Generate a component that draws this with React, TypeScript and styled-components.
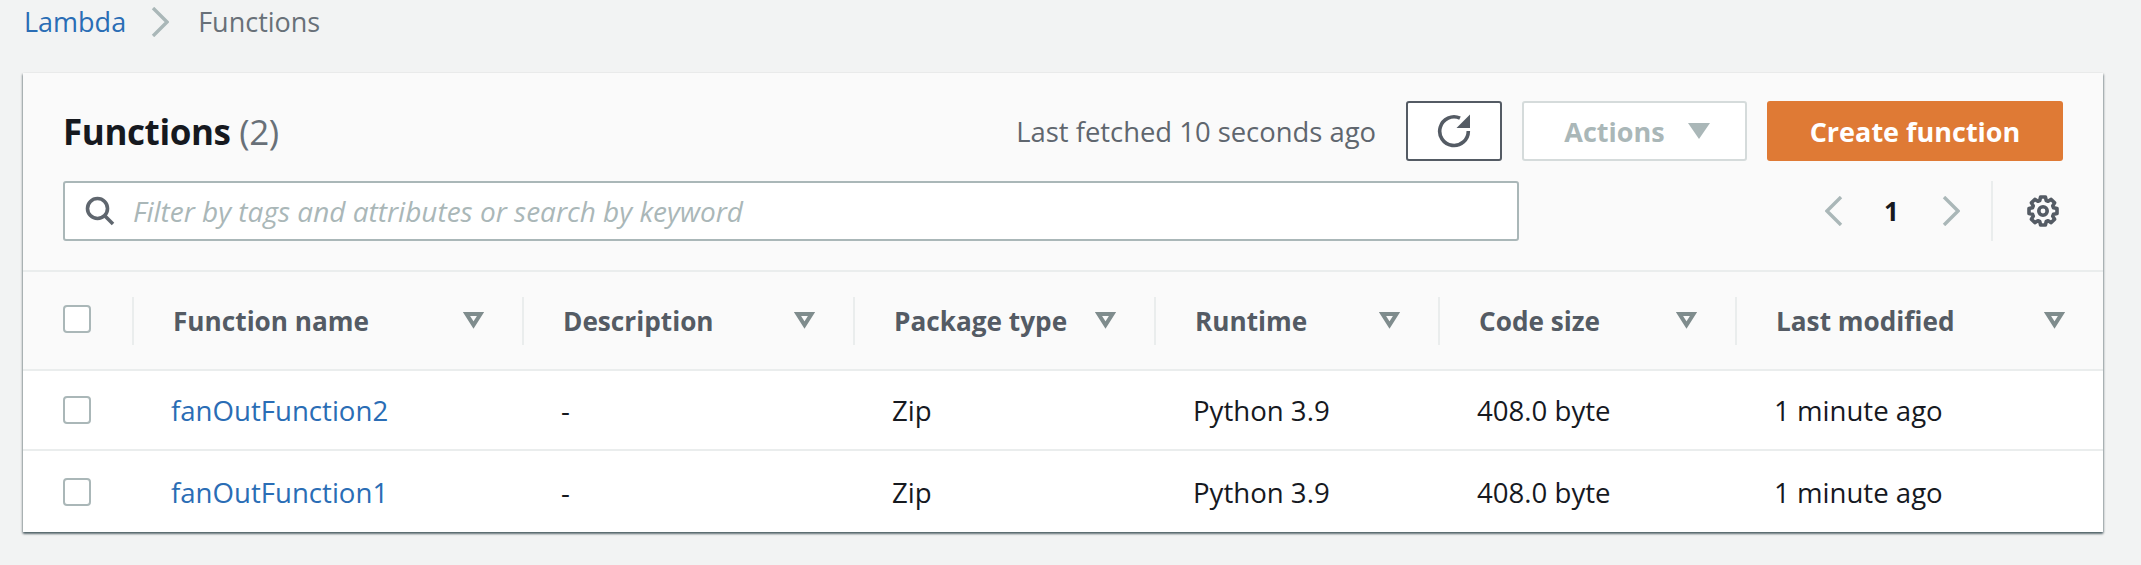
import React from "react";
import styled, { createGlobalStyle } from "styled-components";

const Global = createGlobalStyle`
  html, body { margin: 0; padding: 0; background: #f2f3f3; }
  body { font-family: "Open Sans", "Noto Sans", "Liberation Sans", sans-serif; color: #16191f; }
`;

const COLS = "109px 390px 331px 301px 284px 297px 1fr";

const Page = styled.div`
  height: 565px;
  overflow: hidden;
  padding: 0 38px 0 23px;
  box-sizing: border-box;
`;

const Breadcrumbs = styled.nav`
  height: 73px;
  display: flex;
  align-items: flex-start;
  padding: 5px 0 0 1px;
  box-sizing: border-box;
  font-size: 27px;
  line-height: 34px;
`;

const CrumbLink = styled.a`
  color: #2a6db5;
`;

const CrumbCurrent = styled.span`
  color: #687078;
`;

const CrumbSep = styled.svg`
  width: 18px;
  height: 30px;
  margin: 2px 29px 0 25px;
  fill: none;
  stroke: #aab7b8;
  stroke-width: 3.4;
`;

const Panel = styled.section`
  background: #fff;
  box-shadow: 0 2px 2px 0 rgba(0, 28, 36, 0.5), 1px 1px 2px 0 rgba(0, 28, 36, 0.22),
    -1px 1px 2px 0 rgba(0, 28, 36, 0.22);
`;

const PanelHeader = styled.header`
  background: #fafafa;
  height: 199px;
  padding: 28px 40px 0 40px;
  box-sizing: border-box;
  border-bottom: 2px solid #eaeded;
  display: flex;
  flex-direction: column;
  gap: 20px;
`;

const TitleRow = styled.div`
  display: flex;
  align-items: center;
  height: 60px;
`;

const Title = styled.h1`
  margin: 0;
  flex: 1;
  font-size: 35px;
  font-weight: 700;
  color: #16191f;
  letter-spacing: -0.4px;
`;

const Count = styled.span`
  font-weight: 400;
  color: #687078;
`;

const Fetched = styled.span`
  font-size: 27.4px;
  color: #5f666e;
  margin-right: 30px;
`;

const BaseButton = styled.button`
  height: 60px;
  box-sizing: border-box;
  border-radius: 3px;
  font-family: inherit;
  font-size: 27px;
  font-weight: 700;
  display: flex;
  align-items: center;
  justify-content: center;
  padding: 0;
`;

const RefreshButton = styled(BaseButton)`
  width: 96px;
  background: #fff;
  border: 2px solid #545b64;
  color: #545b64;
  margin-right: 20px;
`;

const ActionsButton = styled(BaseButton)`
  width: 225px;
  background: #fff;
  border: 2px solid #d5dbdb;
  color: #aab7b8;
  gap: 23px;
  padding-left: 5px;
  margin-right: 20px;
`;

const CreateButton = styled(BaseButton)`
  width: 296px;
  background: #df7a35;
  border: none;
  color: #fff;
`;

const FilterRow = styled.div`
  display: flex;
  align-items: flex-start;
  height: 60px;
`;

const Search = styled.div`
  width: 1456px;
  height: 60px;
  box-sizing: border-box;
  background: #fff;
  border: 2px solid #aab7b8;
  border-radius: 3px;
  display: flex;
  align-items: center;
  padding-left: 20px;
  gap: 18px;
`;

const SearchText = styled.span`
  font-size: 28px;
  font-style: italic;
  color: #aab7b8;
`;

const Pager = styled.div`
  margin-left: auto;
  margin-right: 3px;
  display: flex;
  align-items: center;
  height: 60px;
`;

const PageNumber = styled.span`
  font-size: 26px;
  font-weight: 700;
  color: #16191f;
  width: 99px;
  text-align: center;
  padding-right: 2px;
  box-sizing: border-box;
`;

const PageDivider = styled.div`
  width: 2px;
  height: 60px;
  background: #eaeded;
  margin: 0 33px 0 31px;
`;

const Chevron = styled.svg`
  width: 18px;
  height: 30px;
  fill: none;
  stroke: #aab7b8;
  stroke-width: 3.4;
`;

const HeadRow = styled.div`
  display: grid;
  grid-template-columns: ${COLS};
  height: 97px;
  background: #fafafa;
  border-bottom: 2px solid #eaeded;
`;

const CheckCell = styled.div`
  display: flex;
  align-items: center;
  padding-left: 40px;
`;

const Check = styled.span`
  display: block;
  width: 28px;
  height: 28px;
  box-sizing: border-box;
  background: #fff;
  border: 2px solid #aab7b8;
  border-radius: 4px;
`;

const HeadCheck = styled(Check)`
  margin-top: -3px;
`;

const HeadCell = styled.div`
  position: relative;
  display: flex;
  align-items: center;
  justify-content: space-between;
  padding: 0 38px 0 41px;
  font-size: 26.2px;
  font-weight: 700;
  color: #545b64;

  &::before {
    content: "";
    position: absolute;
    left: 0;
    top: 25px;
    height: 48px;
    width: 2px;
    background: #eaeded;
  }
`;

const HeadLabel = styled.span`
  white-space: nowrap;
`;

const Sort = styled.svg`
  width: 21px;
  height: 17px;
  flex: none;
  fill: none;
  stroke: #7f8c8d;
  stroke-width: 4;
  stroke-linejoin: miter;
`;

const Row = styled.div<{ $last?: boolean }>`
  display: grid;
  grid-template-columns: ${COLS};
  height: ${(p) => (p.$last ? "81px" : "78px")};
  background: #fff;
  border-bottom: ${(p) => (p.$last ? "none" : "2px solid #eaeded")};
`;

const Cell = styled.div`
  display: flex;
  align-items: center;
  padding-left: 39px;
  font-size: 27.6px;
  color: #16191f;
  white-space: nowrap;
`;

const FnLink = styled.a`
  color: #2a6db5;
`;

const columns = ["Function name", "Description", "Package type", "Runtime", "Code size", "Last modified"];

const rows = [
  { name: "fanOutFunction2", last: false },
  { name: "fanOutFunction1", last: true },
];

function gearPath() {
  const c = 17;
  const pts: string[] = [];
  for (let i = 0; i < 8; i++) {
    const a = (i * Math.PI) / 4 - Math.PI / 2;
    const at = (r: number, d: number) =>
      `${(c + r * Math.cos(a + d)).toFixed(2)} ${(c + r * Math.sin(a + d)).toFixed(2)}`;
    pts.push(at(11, -0.3), at(14.2, -0.17), at(14.2, 0.17), at(11, 0.3));
  }
  return `M${pts.join(" L")} Z`;
}

export default function App() {
  return (
    <Page>
      <Global />
      <Breadcrumbs>
        <CrumbLink>Lambda</CrumbLink>
        <CrumbSep viewBox="0 0 18 30">
          <path d="M2 1 L16 15 L2 29" />
        </CrumbSep>
        <CrumbCurrent>Functions</CrumbCurrent>
      </Breadcrumbs>
      <Panel>
        <PanelHeader>
          <TitleRow>
            <Title>
              Functions <Count>(2)</Count>
            </Title>
            <Fetched>Last fetched 10 seconds ago</Fetched>
            <RefreshButton aria-label="Refresh">
              <svg width="34" height="34" viewBox="0 0 34 34" fill="none" stroke="currentColor" strokeWidth="3.6">
                <path d="M23 4.2 A14.3 14.3 0 1 0 31.3 17" />
                <path d="M33 0.5 V14 H19.5 Z" fill="currentColor" stroke="none" />
              </svg>
            </RefreshButton>
            <ActionsButton disabled>
              Actions
              <svg width="22" height="16" viewBox="0 0 22 16" fill="#aab7b8">
                <path d="M0 0 H22 L11 16 Z" />
              </svg>
            </ActionsButton>
            <CreateButton>Create function</CreateButton>
          </TitleRow>
          <FilterRow>
            <Search>
              <svg width="30" height="30" viewBox="0 0 30 30" fill="none" stroke="#5f666e" strokeWidth="3.6">
                <circle cx="12.5" cy="12.5" r="10" />
                <path d="M19.5 19.5 L28 28" />
              </svg>
              <SearchText>Filter by tags and attributes or search by keyword</SearchText>
            </Search>
            <Pager>
              <Chevron viewBox="0 0 18 30">
                <path d="M16 1 L2 15 L16 29" />
              </Chevron>
              <PageNumber>1</PageNumber>
              <Chevron viewBox="0 0 18 30">
                <path d="M2 1 L16 15 L2 29" />
              </Chevron>
              <PageDivider />
              <svg width="34" height="34" viewBox="0 0 34 34" fill="none" stroke="#545b64" strokeWidth="3.6" strokeLinejoin="round">
                <path d={gearPath()} />
                <circle cx="17" cy="17" r="4.2" />
              </svg>
            </Pager>
          </FilterRow>
        </PanelHeader>
        <HeadRow>
          <CheckCell>
            <HeadCheck />
          </CheckCell>
          {columns.map((c) => (
            <HeadCell key={c}>
              <HeadLabel>{c}</HeadLabel>
              <Sort viewBox="0 0 21 17">
                <path d="M3.5 2 H17.5 L10.5 13 Z" />
              </Sort>
            </HeadCell>
          ))}
        </HeadRow>
        {rows.map((r) => (
          <Row key={r.name} $last={r.last}>
            <CheckCell>
              <Check />
            </CheckCell>
            <Cell>
              <FnLink>{r.name}</FnLink>
            </Cell>
            <Cell>-</Cell>
            <Cell>Zip</Cell>
            <Cell>Python 3.9</Cell>
            <Cell>408.0 byte</Cell>
            <Cell>1 minute ago</Cell>
          </Row>
        ))}
      </Panel>
    </Page>
  );
}
